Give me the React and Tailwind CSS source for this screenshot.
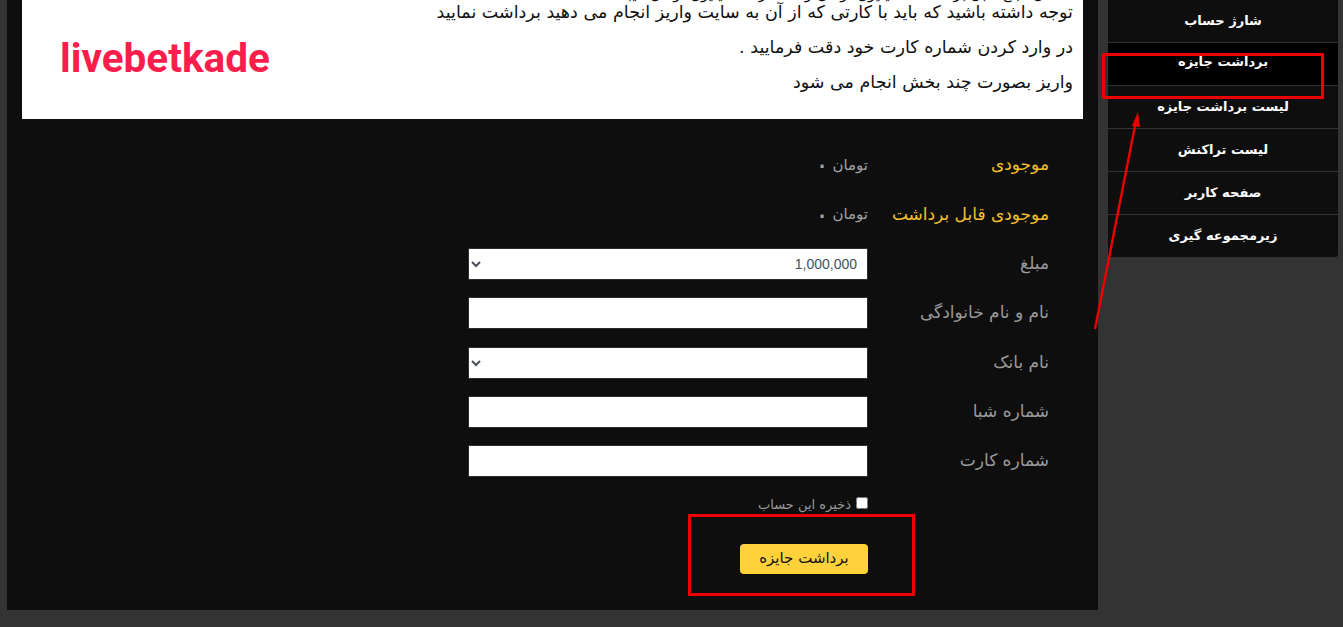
import React from "react";

const menu = ["شارژ حساب", "برداشت جایزه", "لیست برداشت جایزه", "لیست تراکنش", "صفحه کاربر", "زیرمجموعه گیری"];

function Row({ label, children, yellow, h = "h-[49px]" }) {
  return (
    <div className={`flex items-center ${h}`}>
      <div className={`w-[181px] shrink-0 text-[17px] ${yellow ? "text-[#f5c02b]" : "text-[#9a9a9a]"}`}>{label}</div>
      <div className="w-[400px]">{children}</div>
    </div>
  );
}

const field = "block w-[400px] h-[32px] bg-white border border-[#2a2d33] text-[14px] text-[#495057]";

function Balance() {
  return (
    <span className="flex items-center gap-[3px] text-[15px] text-[#a3a3a3]">
      <span>تومان</span>
      <span className="text-[28px] leading-[20px]">۰</span>
    </span>
  );
}

export default function App() {
  return (
    <div dir="rtl" className="relative h-[627px] w-[1343px] overflow-hidden bg-[#333333] font-['DejaVu_Sans',sans-serif]">
      <div className="flex items-start pr-[5px]">
        <aside className="w-[230px] shrink-0 -mt-px bg-[#0e0e0e] rounded-b-[3px] overflow-hidden">
          {menu.map((m, i) => (
            <div
              key={m}
              className={`h-[43px] flex items-center justify-center text-[13px] font-bold text-white ${i > 0 ? "border-t border-[#333333]" : ""} ${i === 1 ? "bg-black pb-1" : ""}`}
            >
              {m}
            </div>
          ))}
        </aside>
        <main className="ml-0 mr-[10px] w-[1091px] h-[610px] bg-[#0e0e0e] px-[15px]">
          <section className="h-[119px] bg-white flex justify-between overflow-hidden pr-[10px] pl-[38px]">
            <div className="-mt-[14px] text-[17.5px] text-[#111] leading-[35px] whitespace-nowrap">
              <p className="text-[15px] leading-[17px] mb-[-8px]">حداقل مبلغ قابل برداشت ۱ میلیون تومان و حداکثر <b>۵۰</b> میلیون تومان میباشد</p>
              <p>توجه داشته باشید که باید با کارتی که از آن به سایت واریز انجام می دهید برداشت نمایید</p>
              <p>در وارد کردن شماره کارت خود دقت فرمایید .</p>
              <p>واریز بصورت چند بخش انجام می شود</p>
            </div>
            <div dir="ltr" className="pt-[33px] text-[40.5px] leading-[50px] font-bold text-[#fb1d4b] font-['Roboto',sans-serif]">livebetkade</div>
          </section>
          <form className="pr-[34px] pt-[21px]">
            <Row label="موجودی" yellow h="h-[50px]"><Balance /></Row>
            <Row label="موجودی قابل برداشت" yellow><Balance /></Row>
            <Row label="مبلغ">
              <select className={field + " pr-[6px] font-['Liberation_Sans',sans-serif]"} defaultValue="1">
                <option value="1">1,000,000</option>
              </select>
            </Row>
            <Row label="نام و نام خانوادگی" h="h-[50px]"><input className={field} /></Row>
            <Row label="نام بانک"><select className={field}><option></option></select></Row>
            <Row label="شماره شبا"><input className={field} /></Row>
            <Row label="شماره کارت"><input className={field} /></Row>
            <div className="pr-[181px] pt-[7px] flex items-center gap-[5px] text-[13px] text-[#9a9a9a]">
              <input type="checkbox" className="w-[12px] h-[12px] m-0 accent-white appearance-auto" />
              <label className="mt-[3px]">ذخیره این حساب</label>
            </div>
            <div className="pr-[181px] pt-[29px]">
              <button type="button" className="w-[128px] h-[30px] bg-[#ffd23c] rounded-[4px] text-[15px] text-[#111]">برداشت جایزه</button>
            </div>
          </form>
        </main>
      </div>

      <div className="absolute left-[1102px] top-[53px] w-[222px] h-[46px] border-[3px] border-[#ee0000]" />
      <div className="absolute left-[688px] top-[514px] w-[227px] h-[82px] border-[3px] border-[#ee0000]" />
      <svg className="absolute left-[1085px] top-[105px]" width="65" height="230" viewBox="0 0 65 230" fill="none">
        <path d="M10 224 L50 21" stroke="#ee0000" strokeWidth="2.4" />
        <path d="M53 7 L47 21 L55 22 Z" fill="#ee0000" />
      </svg>
    </div>
  );
}
